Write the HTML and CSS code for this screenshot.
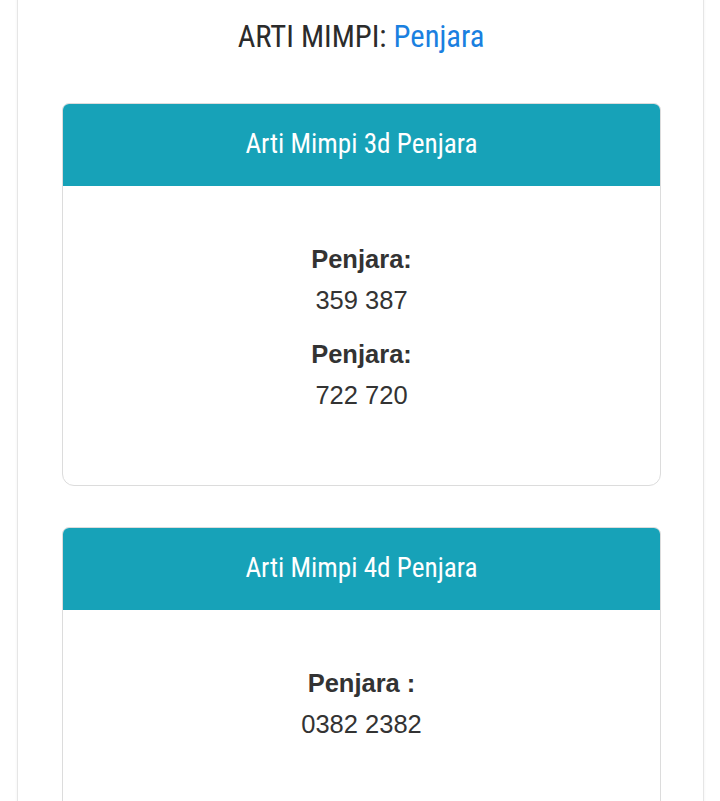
FILE: index.html
```html
<!DOCTYPE html>
<html>
<head>
<meta charset="utf-8">
<link rel="stylesheet" href="styles.css">
</head>
<body>
<div class="page">
  <h1 class="title">ARTI MIMPI: <span class="accent">Penjara</span></h1>
  <div class="card">
    <div class="card-head">Arti Mimpi 3d Penjara</div>
    <div class="card-body">
      <p class="entry"><b>Penjara:</b><br>359 387</p>
      <p class="entry"><b>Penjara:</b><br>722 720</p>
    </div>
  </div>
  <div class="card">
    <div class="card-head">Arti Mimpi 4d Penjara</div>
    <div class="card-body">
      <p class="entry"><b>Penjara :</b><br>0382 2382</p>
    </div>
  </div>
</div>
</body>
</html>
```
FILE: styles.css
```css
html, body {
  margin: 0;
  padding: 0;
  background: #ffffff;
}
.page {
  margin: -20px 16px 0 17px;
  padding: 20px 43px 40px 44px;
  border: 1px solid #e6e6e6;
  box-shadow: 0 0 3px rgba(0,0,0,0.06);
  min-height: 900px;
  background: #fff;
}
.title {
  margin: 0;
  padding-top: 16px;
  font-family: "Roboto Condensed", "Liberation Sans Narrow", "DejaVu Sans Condensed", Roboto, sans-serif;
  font-stretch: condensed;
  font-weight: 400;
  font-size: 30.6px;
  line-height: 40px;
  color: #2b2b2b;
  text-align: center;
}
.accent {
  color: #1a80e0;
}
.card {
  width: 597px;
  margin: 46px 0 0;
  border: 1px solid #dcdcdc;
  border-radius: 7px 7px 12px 12px;
  overflow: hidden;
}
.card + .card {
  margin-top: 41px;
}
.card-head {
  background: #17a2b8;
  color: #fff;
  text-align: center;
  font-family: "Roboto Condensed", "Liberation Sans Narrow", "DejaVu Sans Condensed", Roboto, sans-serif;
  font-stretch: condensed;
  font-size: 27.2px;
  height: 82px;
  line-height: 80px;
}
.card-body {
  padding: 53px 20px 56px;
  text-align: center;
  font-family: "Liberation Sans", Arial, sans-serif;
  font-size: 25.5px;
  line-height: 41px;
  color: #333;
}
.entry {
  margin: 0 0 13px;
}
```
